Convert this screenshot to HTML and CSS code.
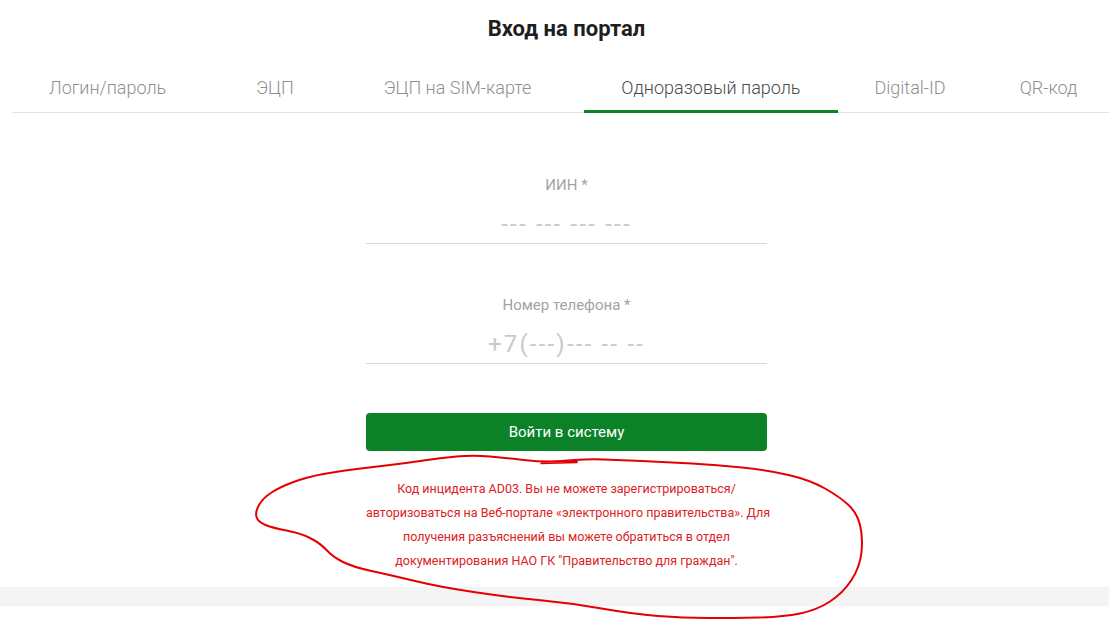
FILE: index.html
```html
<!DOCTYPE html>
<html lang="ru">
<head>
    <meta charset="UTF-8">
    <meta name="viewport" content="width=device-width, initial-scale=1.0">
    <title>Вход на портал</title>
    <link rel="stylesheet" href="styles.css">
</head>
<body>
    <div class="page">
        <h1 class="title">Вход на портал</h1>

        <!-- Способы входа -->
        <nav class="tabs">
            <a class="tab">Логин/пароль</a>
            <a class="tab">ЭЦП</a>
            <a class="tab">ЭЦП на SIM-карте</a>
            <a class="tab tab-active">Одноразовый пароль</a>
            <a class="tab">Digital-ID</a>
            <a class="tab">QR-код</a>
        </nav>

        <form class="login-form">
            <label class="field">
                <span class="field-label">ИИН *</span>
                <input type="text" class="field-input" placeholder="--- --- --- ---">
            </label>

            <label class="field">
                <span class="field-label">Номер телефона *</span>
                <input type="text" class="field-input" placeholder="+7(---)--- -- --">
            </label>

            <button type="button" class="submit">Войти в систему</button>

            <p class="error">
                Код инцидента AD03. Вы не можете зарегистрироваться/<br>
                авторизоваться на Веб-портале «электронного правительства». Для<br>
                получения разъяснений вы можете обратиться в отдел<br>
                документирования НАО ГК "Правительство для граждан".
            </p>
        </form>
    </div>

    <div class="band"></div>

    <!-- пометка от руки поверх страницы -->
    <svg class="scribble" width="1109" height="620" viewBox="0 0 1109 620">
        <path d="M 577 461 L 558.5 461.5 Q 540 462 523.5 460 Q 507 458 490 456.5 Q 473 455 456.5 456.5 Q 440 458 423.5 460.5 Q 407 463 390 465 Q 373 467 356.5 469 Q 340 471 323.5 474 Q 307 477 293.5 482 Q 280 487 271.5 492.5 Q 263 498 259 505 Q 255 512 256.5 517 Q 258 522 265.5 525 Q 273 528 286.5 530.5 Q 300 533 310 538 Q 320 543 326.5 550 Q 333 557 343 562 Q 353 567 371.5 571 Q 390 575 415 581 Q 440 587 473.5 592 Q 507 597 538.5 600 Q 570 603 601.5 608.5 Q 633 614 658 616 Q 683 618 708 618 Q 733 618 758 617.5 Q 783 617 800 613.5 Q 817 610 830 601.5 Q 843 593 851.5 580 Q 860 567 861.5 552 Q 863 537 860 525 Q 857 513 848.5 505 Q 840 497 825 488.5 Q 810 480 788.5 475 Q 767 470 742 467.5 Q 717 465 692 463.5 Q 667 462 642 461 Q 617 460 603.5 459.5 Q 590 459 575 460 Q 560 461 551 461.5 L 542 462"/>
        <path class="scribble-thin" d="M 541 463.5 L 577 462.5"/>
    </svg>
</body>
</html>
```

FILE: styles.css
```css
body {
    margin: 0;
    overflow: hidden;
    background: #fff;
    font-family: Roboto, "Noto Sans", sans-serif;
}

/* the content column sits 12px in and runs past the right edge */
.page {
    width: 1109px;
    margin-left: 12px;
}

.title {
    margin: 0;
    padding-top: 14px;
    font-size: 22px;
    line-height: 30px;
    font-weight: 700;
    color: #1e1e1e;
    text-align: center;
}

.tabs {
    display: flex;
    margin-top: 24px;
    border-bottom: 1px solid #e2e2e2;
}

.tab {
    padding: 8px 37px 10px;
    margin-bottom: -1px;
    font-size: 18px;
    font-weight: 300;
    line-height: 24px;
    color: #8f8f8f;
    border-bottom: 3px solid transparent;
    white-space: nowrap;
}

/* the first three tabs keep a little extra room after them */
.tab:nth-child(-n+3) {
    margin-right: 16px;
}

.tab-active {
    color: #4a4a4a;
    border-bottom-color: #0b8228;
}

.login-form {
    width: 401px;
    margin: 0 auto;
    padding-top: 62px;
    display: flex;
    flex-direction: column;
}

.field {
    display: flex;
    flex-direction: column;
}

.field + .field {
    margin-top: 51px;
}

.field-label {
    font-size: 15px;
    line-height: 20px;
    color: #a3a3a3;
    text-align: center;
}

.field-input {
    margin-top: 10px;
    height: 39px;
    box-sizing: border-box;
    padding: 0;
    border: none;
    border-bottom: 1px solid #d8d8d8;
    outline: none;
    font-family: inherit;
    font-size: 24px;
    letter-spacing: 2.2px;
    text-align: center;
    color: #444;
}

.field-input::placeholder {
    color: #c9c9c9;
}

.submit {
    margin-top: 49px;
    height: 38px;
    border: none;
    border-radius: 4px;
    background: #0b8228;
    color: #fff;
    font-family: inherit;
    font-size: 15px;
}

.error {
    margin: 26px 0 0;
    font-size: 12.5px;
    line-height: 24px;
    color: #dc2222;
    text-align: center;
    white-space: nowrap;
}

.band {
    height: 19px;
    margin-top: 14px;
    background: #f4f4f4;
}

.scribble {
    position: absolute;
    top: 0;
    left: 0;
    pointer-events: none;
    fill: none;
    stroke: #e40000;
    stroke-width: 2;
    stroke-linecap: round;
    stroke-linejoin: round;
}

.scribble .scribble-thin {
    stroke-width: 1.5;
}
```
